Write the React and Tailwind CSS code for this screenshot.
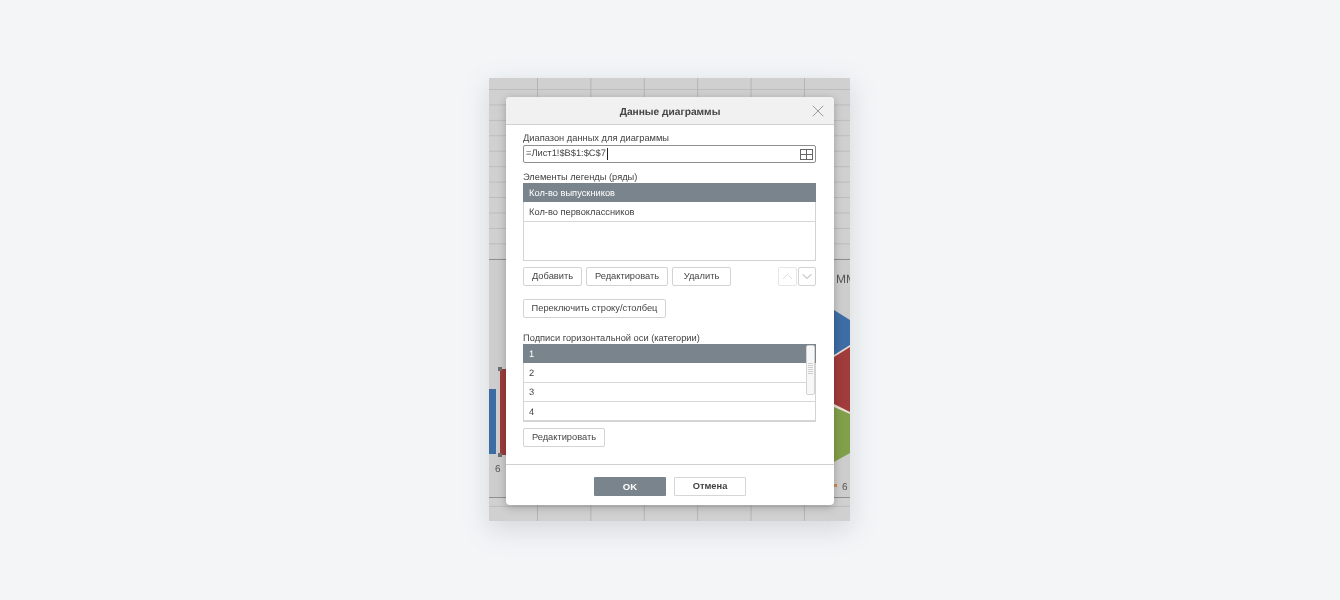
import React from 'react';
import { ChevronUp, ChevronDown, X } from 'lucide-react';

const font = { fontFamily: '"Liberation Sans", Arial, sans-serif' };

const Btn = ({ children, className = '' }) => (
  <button className={`h-[19px] whitespace-nowrap rounded-[2px] border border-[#d3d3d3] bg-white text-[9.3px] leading-none text-[#444] ${className}`}>
    {children}
  </button>
);

const Row = ({ children, active }) => (
  <div className={`flex h-[19.3px] items-center border-b pt-[3px] text-[9.3px] ${active ? '-mx-px -mt-px border-[#7a848c] bg-[#7a848c] pl-[6px] text-white' : 'border-[#d6d6d6] bg-white pl-[5px] text-[#444]'}`}>
    {children}
  </div>
);

// spreadsheet and chart behind the dialog
const Sheet = () => (
  <div className="absolute inset-0 overflow-hidden bg-[#d0d0d0]">
    <div className="absolute inset-0 bg-[linear-gradient(90deg,#b4b4b4_1px,transparent_1px),linear-gradient(180deg,#bcbcbc_1px,transparent_1px)] bg-[size:53.4px_15.45px] bg-[position:48px_11px]" />
    {/* chart area */}
    <div className="absolute left-0 right-0 top-[181px] h-[239px] border-t border-[#909090] border-b bg-[#cdcdcd]" />
    <div className="absolute left-0 top-[311px] h-[65px] w-[7px] bg-[#3d6ca3]" />
    <div className="absolute left-[11px] top-[291px] h-[86px] w-[6px] bg-[#9e3b3a]" />
    <div className="absolute left-[9px] top-[289px] h-[4px] w-[4px] bg-[#6f6f6f]" />
    <div className="absolute left-[9px] top-[375px] h-[4px] w-[4px] bg-[#6f6f6f]" />
    <span className="absolute left-[6px] top-[384px] text-[10px] text-[#555]">6</span>
    <span className="absolute left-[347px] top-[192px] text-[12px] text-[#555]">MM</span>
    <svg className="absolute left-[345px] top-[225px]" width="16" height="160" viewBox="0 0 16 160">
      <path d="M0 7 L16 17 L16 111 L0 159 Z" fill="#e8e0d4" />
      <path d="M0 7 L16 17 L16 42 L0 52 Z" fill="#3e6ca5" />
      <path d="M0 54 L16 44 L16 109 L0 101 Z" fill="#a03c3b" />
      <path d="M0 104 L16 111 L16 150 L0 159 Z" fill="#82a04a" />
    </svg>
    <span className="absolute left-[345px] top-[406px] h-[3px] w-[3px] bg-[#d98a4c]" />
    <span className="absolute left-[353px] top-[402px] text-[10px] text-[#555]">6</span>
  </div>
);

export default function App() {
  return (
    <div className="h-[600px] w-[1340px] bg-[#f3f5f7] pl-[489px] pt-[78px] blur-[0.35px] [text-rendering:geometricPrecision]" style={font}>
      <div className="relative h-[443px] w-[361px] shadow-[0_8px_24px_rgba(120,130,140,0.25)]">
        <Sheet />
        <div className="absolute left-[17px] top-[19px] flex h-[408px] w-[328px] flex-col overflow-hidden rounded-[4px] bg-white shadow-[0_2px_8px_rgba(0,0,0,0.25)]">
          <div className="relative flex h-[28px] shrink-0 items-center justify-center border-b border-[#d0d0d0] bg-[#f1f1f1] pt-[4px]">
            <span className="text-[10.2px] font-bold text-[#444]">Данные диаграммы</span>
            <X className="absolute right-[6px] top-[4px] h-[20px] w-[20px] text-[#8a8a8a]" strokeWidth={1} absoluteStrokeWidth />
          </div>

          <div className="flex flex-1 flex-col px-[17px] pt-[6px]">
            <div className="h-[13px] text-[9.3px] leading-[15px] text-[#444]">Диапазон данных для диаграммы</div>
            <div className="mt-[1px] flex h-[18px] w-[293px] items-center justify-between rounded-[2px] border border-[#8f8f8f] pl-[2px] pr-[2px]">
              <span className="flex items-center text-[9.3px] text-[#444]">=Лист1!$B$1:$C$7<span className="ml-[1px] h-[12px] w-[1px] bg-[#222]" /></span>
              <svg width="13" height="11" viewBox="0 0 13 11" fill="none" stroke="#666" strokeWidth="1">
                <rect x="0.5" y="0.5" width="12" height="10" />
                <path d="M6.5 0.5V10.5M0.5 5.5H12.5" />
              </svg>
            </div>

            <div className="mt-[7px] h-[13px] text-[9.3px] leading-[15px] text-[#444]">Элементы легенды (ряды)</div>
            <div className="h-[78px] w-[293px] border border-[#d3d3d3] bg-white">
              <Row active>Кол-во выпускников</Row>
              <Row>Кол-во первоклассников</Row>
            </div>

            <div className="mt-[6px] flex w-[293px] items-center">
              <Btn className="w-[59px]">Добавить</Btn>
              <Btn className="ml-[4px] w-[82px]">Редактировать</Btn>
              <Btn className="ml-[4px] w-[59px]">Удалить</Btn>
              <button className="ml-auto flex h-[19px] w-[19px] items-center justify-center rounded-[2px] border border-[#e6e6e6] bg-white">
                <ChevronUp className="h-[17px] w-[17px] text-[#cfcfcf]" strokeWidth={1} absoluteStrokeWidth />
              </button>
              <button className="ml-[1px] flex h-[19px] w-[18px] items-center justify-center rounded-[2px] border border-[#d3d3d3] bg-white">
                <ChevronDown className="h-[17px] w-[17px] text-[#777]" strokeWidth={1} absoluteStrokeWidth />
              </button>
            </div>

            <Btn className="mt-[13px] w-[143px]">Переключить строку/столбец</Btn>

            <div className="mt-[13px] h-[13px] text-[9.3px] leading-[15px] text-[#444]">Подписи горизонтальной оси (категории)</div>
            <div className="relative h-[78px] w-[293px] border border-[#d3d3d3] bg-white">
              <Row active>1</Row>
              <Row>2</Row>
              <Row>3</Row>
              <Row>4</Row>
              <div className="absolute right-0 top-0 h-[50px] w-[9px] rounded-[2px] border border-[#d3d3d3] bg-[#f7f7f7]">
                <div className="mx-auto mt-[17px] h-[12px] w-[5px] bg-[repeating-linear-gradient(180deg,#cfcfcf_0_1px,transparent_1px_2px)]" />
              </div>
            </div>

            <Btn className="mt-[6px] w-[82px]">Редактировать</Btn>
          </div>

          <div className="flex h-[41px] shrink-0 items-start justify-center gap-[8px] border-t border-[#d0d0d0] pt-[12px]">
            <button className="h-[19px] w-[72px] rounded-[1px] bg-[#7a848c] text-[9.6px] font-bold leading-none text-white">OK</button>
            <button className="h-[19px] w-[72px] rounded-[1px] border border-[#d6d6d6] bg-white text-[9.3px] font-bold leading-none text-[#444]">Отмена</button>
          </div>
        </div>
      </div>
    </div>
  );
}
